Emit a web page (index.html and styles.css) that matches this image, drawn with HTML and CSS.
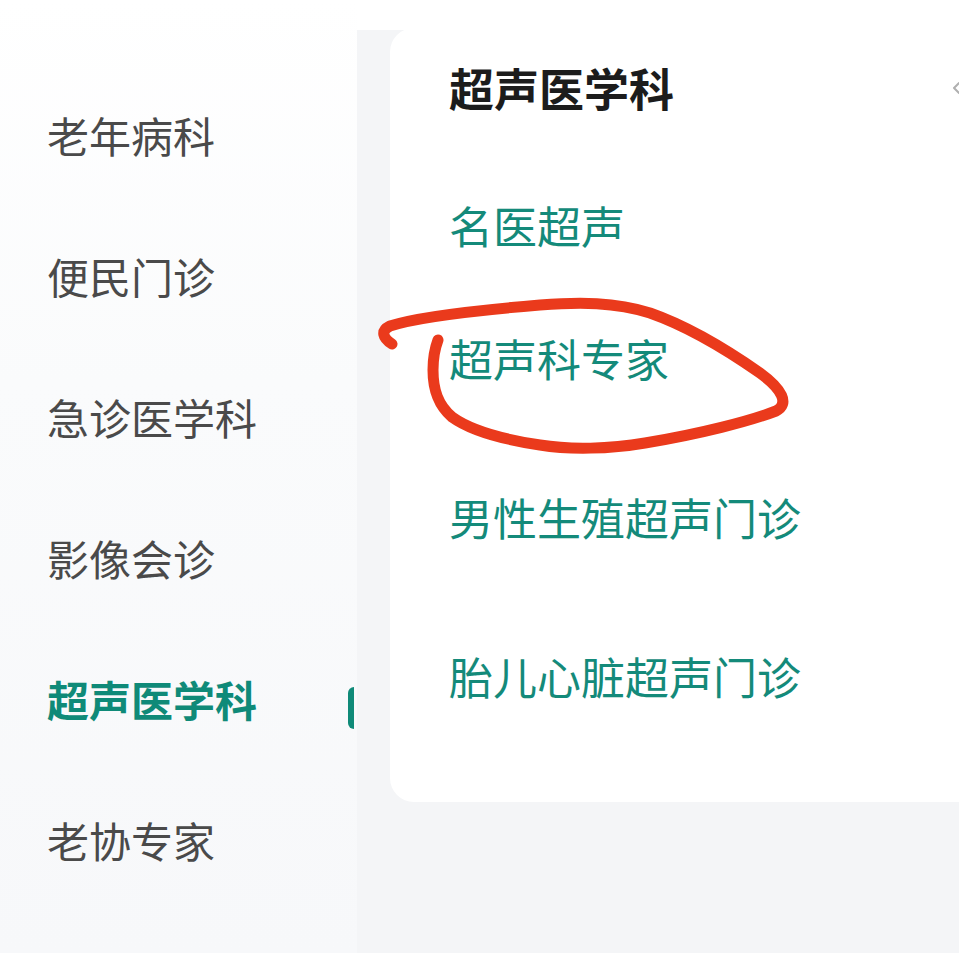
FILE: index.html
```html
<!DOCTYPE html>
<html lang="zh-CN">
<head>
<meta charset="utf-8">
<title>科室选择</title>
<link rel="stylesheet" href="styles.css">
</head>
<body>
<div class="page">
  <nav class="sidebar">
    <div class="side-item">老年病科</div>
    <div class="side-item">便民门诊</div>
    <div class="side-item">急诊医学科</div>
    <div class="side-item">影像会诊</div>
    <div class="side-item active">超声医学科<span class="indicator"></span></div>
    <div class="side-item">老协专家</div>
  </nav>
  <main class="panel">
    <div class="panel-body">
      <section class="card">
        <div class="card-head">
          <h2 class="card-title">超声医学科</h2>
          <svg class="head-icon" width="16" height="20" viewBox="0 0 16 20"><path d="M8 5 L3 10 L8 15" fill="none" stroke="#b0b0b0" stroke-width="2" stroke-linecap="round" stroke-linejoin="round"/></svg>
        </div>
        <ul class="sub-list">
          <li class="sub-item tight">名医超声</li>
          <li class="sub-item">超声科专家</li>
          <li class="sub-item">男性生殖超声门诊</li>
          <li class="sub-item">胎儿心脏超声门诊</li>
        </ul>
      </section>
    </div>
  </main>
  <svg class="annotation" width="959" height="953" viewBox="0 0 959 953">
    <path d="M392 344 C383 338 380 331 390 326 C420 316 480 310 540 305 C580 302 615 302 650 313 C690 327 730 352 760 373 C782 389 790 404 776 411 C750 421 700 434 645 443 C610 449 570 450 540 445 C500 439 470 430 452 417 C438 405 433 390 433 370 C433 358 435 348 438 340" fill="none" stroke="#ea3a1c" stroke-width="11" stroke-linecap="round" stroke-linejoin="round"/>
  </svg>
</div>
</body>
</html>
```
FILE: styles.css
```css
html, body {
  margin: 0;
  padding: 0;
  width: 959px;
  height: 953px;
  overflow: hidden;
  background: #ffffff;
  font-family: "Noto Sans CJK SC", "Noto Sans", sans-serif;
}

.page {
  position: relative;
  display: flex;
  width: 959px;
  height: 953px;
}

.sidebar {
  width: 357px;
  flex: none;
  box-sizing: border-box;
  padding-top: 64px;
  background: linear-gradient(to bottom, #ffffff 0%, #fafbfc 40%, #f7f8fa 100%);
  display: flex;
  flex-direction: column;
}

.side-item {
  position: relative;
  height: 141px;
  display: flex;
  align-items: center;
  padding-left: 47px;
  font-size: 42px;
  line-height: 56px;
  color: #4a4a4a;
}

.side-item.active {
  color: #0f8a78;
  font-weight: 700;
}

.indicator {
  position: absolute;
  right: 3px;
  top: 59px;
  width: 6px;
  height: 42px;
  border-radius: 6px 0 0 6px;
  background: #0f8a78;
}

.panel {
  flex: 1;
  min-width: 0;
  display: flex;
  flex-direction: column;
  overflow: hidden;
  background: #ffffff;
}

.panel-body {
  flex: 1;
  margin-top: 30px;
  padding-left: 33px;
  background: #f4f5f7;
}

.card {
  width: 620px;
  box-sizing: border-box;
  margin-top: -2px;
  padding: 29.5px 0 96px 59px;
  background: #ffffff;
  border-radius: 24px;
}

.card-head {
  display: flex;
  align-items: center;
  justify-content: space-between;
  padding-right: 43px;
}

.card-title {
  margin: 0;
  font-size: 45px;
  line-height: 60px;
  font-weight: 700;
  color: #1c1c1c;
}

.head-icon {
  display: block;
}

.sub-list {
  list-style: none;
  margin: 77.5px 0 0;
  padding: 0;
  display: flex;
  flex-direction: column;
  gap: 99px;
}

.sub-item {
  font-size: 44px;
  line-height: 60px;
  color: #148a7a;
}

.sub-item.tight {
  margin-bottom: -26.5px;
}

.annotation {
  position: absolute;
  left: 0;
  top: 0;
  pointer-events: none;
}
```
